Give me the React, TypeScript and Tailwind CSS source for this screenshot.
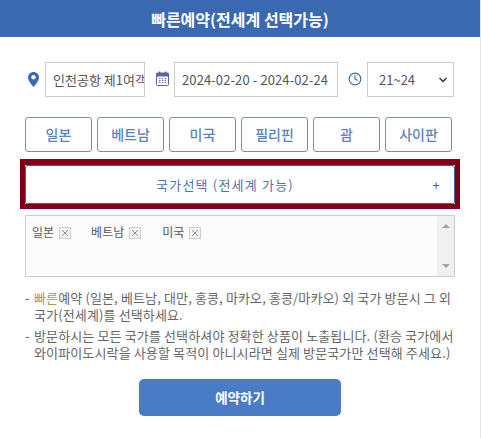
import { Clock, ChevronDown } from 'lucide-react';

const FONT = "font-['Noto_Sans_CJK_KR','Noto_Sans',sans-serif]";
const COUNTRIES = ['일본', '베트남', '미국', '필리핀', '괌', '사이판'];
const PICKED = [
  { name: '일본', mr: 'mr-[20px]' },
  { name: '베트남', mr: 'mr-[21px]' },
  { name: '미국', mr: '' },
];

function Removable({ name, mr }: { name: string; mr: string }) {
  return (
    <span className={`flex items-center ${mr}`}>
      <span className="text-[12px] leading-[17px] text-[#555]">{name}</span>
      <span className="ml-[5px] mt-[3px] flex h-[12px] w-[12px] items-center justify-center border border-[#ccc] bg-[#f4f4f4]">
        <svg width="8" height="8" viewBox="0 0 8 8" stroke="#777" strokeWidth="0.8"><path d="M1 1l6 6M7 1l-6 6" /></svg>
      </span>
    </span>
  );
}

export default function App() {
  return (
    <div className={`h-[438px] w-[481px] overflow-hidden border-r border-[#e6e6e6] bg-white ${FONT}`}>
      <div className="flex h-[37px] items-center justify-center bg-[#3a69b2] text-[16px] font-bold text-white">
        빠른예약(전세계 선택가능)
      </div>

      <div className="mt-[25px] flex h-[35px] items-center pl-[28px]">
        <svg width="11" height="15" viewBox="0 0 11 15" className="mr-[6px]">
          <path d="M5.5 0C2.5 0 0 2.4 0 5.4 0 9 5.5 15 5.5 15S11 9 11 5.4C11 2.4 8.5 0 5.5 0z" fill="#3a69b2" />
          <circle cx="5.5" cy="5.3" r="2.2" fill="#fff" />
        </svg>
        <div className="flex h-full w-[100px] items-center overflow-hidden whitespace-nowrap border border-[#ccc] pl-[7px] text-[13px] text-[#555]">
          인천공항 제1여객터미널
        </div>
        <svg width="13" height="15" viewBox="0 0 13 15" className="ml-[11px] mb-[2px] mr-[5px]">
          <rect x="0.5" y="2" width="12" height="12.5" rx="1" fill="#fff" stroke="#5b62a8" />
          <rect x="0.5" y="2" width="12" height="3.5" fill="#5b62a8" />
          <path d="M3.5 0.5v2.5M9.5 0.5v2.5" stroke="#5b62a8" strokeWidth="1.4" />
          <path d="M3 7.5h1.5M5.8 7.5h1.5M8.6 7.5h1.5M3 9.5h1.5M5.8 9.5h1.5M8.6 9.5h1.5M3 11.5h1.5M5.8 11.5h1.5M8.6 11.5h1.5" stroke="#6b72b0" strokeWidth="1" />
        </svg>
        <div className="flex h-full w-[164px] items-center border border-[#ccc] pl-[7px] text-[13px] tracking-[0.1px] text-[#555]">
          2024-02-20 - 2024-02-24
        </div>
        <Clock size={14} stroke="#3a69b2" className="ml-[10px] mb-[2px] mr-[5px]" />
        <div className="flex h-full w-[87px] items-center justify-between border border-[#ccc] pl-[11px] pr-[4px] text-[13px] text-[#555]">
          21~24
          <ChevronDown size={12} strokeWidth={3.5} stroke="#444" />
        </div>
      </div>

      <div className="ml-[25px] mt-[20px] flex gap-[5px]">
        {COUNTRIES.map((c) => (
          <div key={c} className="flex h-[35px] w-[67px] items-center justify-center rounded-[3px] border border-[#6f8fc4] text-[14px] font-medium text-[#5d83bd]">
            {c}
          </div>
        ))}
      </div>

      <div className="ml-[20px] mt-[7px] h-[50px] w-[440px] border-x-[5px] border-b-[5px] border-t-[6px] border-[#80001a]">
        <div className="relative flex h-full items-center justify-center rounded-[2px] border border-[#3a69b2] pr-[30px] text-[13px] tracking-[1.2px] text-[#5572a8]">
          국가선택 (전세계 가능)
          <span className="absolute right-[13px] text-[13px] text-[#4a5aa8]">+</span>
        </div>
      </div>

      <div className="ml-[25px] mt-[6px] flex h-[62px] w-[430px] border border-[#ccc] bg-[#fcfcfc]">
        <div className="flex flex-1 items-start pl-[6px] pt-[7px]">
          {PICKED.map((p) => (
            <Removable key={p.name} name={p.name} mr={p.mr} />
          ))}
        </div>
        <div className="flex w-[17px] flex-col items-center justify-between bg-[#f0f0f0] py-[8px]">
          <svg width="8" height="4" viewBox="0 0 8 4" fill="#a3a3a3"><path d="M4 0l4 4H0z" /></svg>
          <svg width="8" height="4" viewBox="0 0 8 4" fill="#a3a3a3"><path d="M0 0h8L4 4z" /></svg>
        </div>
      </div>

      <div className="ml-[25px] mt-[12px] w-[430px] text-[13px] leading-[17px] tracking-[0.13px] text-[#666]">
        <div className="flex">
          <span className="w-[9px] shrink-0">-</span>
          <p><span className="text-[#b98f5a]">빠른</span>예약 (일본, 베트남, 대만, 홍콩, 마카오, 홍콩/마카오) 외 국가 방문시 그 외 국가(전세계)를 선택하세요.</p>
        </div>
        <div className="mt-[4px] flex">
          <span className="w-[9px] shrink-0">-</span>
          <p>방문하시는 모든 국가를 선택하셔야 정확한 상품이 노출됩니다. (환승 국가에서 와이파이도시락을 사용할 목적이 아니시라면 실제 방문국가만 선택해 주세요.)</p>
        </div>
      </div>

      <div className="ml-[139px] mt-[18px] flex h-[37px] w-[202px] items-center justify-center rounded-[5px] bg-[#4a7cc5] text-[13.5px] font-bold text-white">
        예약하기
      </div>
    </div>
  );
}
